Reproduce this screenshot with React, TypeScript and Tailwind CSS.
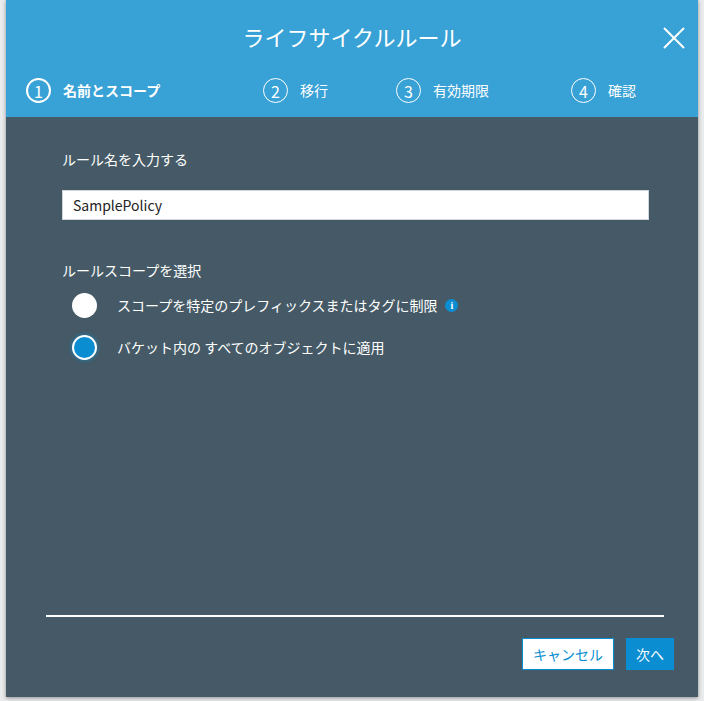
const font = { fontFamily: '"Noto Sans CJK JP", "Liberation Sans", sans-serif' };

const Step = ({ n, label, active }: { n: number; label: string; active?: boolean }) => (
  <div className="flex items-center gap-[12px]">
    <div
      className={`w-[25px] h-[25px] rounded-full border-white flex items-center justify-center text-white text-[16px] leading-none ${active ? "border-2" : "border-[1.5px]"}`}
    >
      {n}
    </div>
    <span className={`text-white text-[14px] ${active ? "font-bold" : ""}`}>{label}</span>
  </div>
);

export default function App() {
  return (
    <div className="w-[704px] h-[701px] bg-[#e9ebed] overflow-hidden" style={font}>
      <div className="ml-[6px] w-[692px] h-[697px] bg-[#455a66] flex flex-col shadow-[0_1px_4px_rgba(0,0,0,0.4)]">
        {/* Header */}
        <div className="h-[117px] bg-[#38a1d6] relative">
          <div className="text-center text-white text-[22px] pt-[20px]">ライフサイクルルール</div>
          <button className="absolute right-[12px] top-[26px]">
            <svg width="24" height="24" viewBox="0 0 24 24" stroke="white" strokeWidth="2" fill="none">
              <path d="M2 2L22 22M22 2L2 22" />
            </svg>
          </button>
          <div className="flex items-center mt-[25px] pl-[20px]">
            <div className="w-[237px]"><Step n={1} label="名前とスコープ" active /></div>
            <div className="w-[133px]"><Step n={2} label="移行" /></div>
            <div className="w-[175px]"><Step n={3} label="有効期限" /></div>
            <Step n={4} label="確認" />
          </div>
        </div>

        {/* Body */}
        <div className="flex-1 px-[56px] pt-[32px] text-white">
          <div className="text-[14px]">ルール名を入力する</div>
          <input
            className="mt-[20px] w-[587px] h-[30px] bg-white border border-gray-300 px-[10px] text-[14px] text-[#222]"
            defaultValue="SamplePolicy"
          />
          <div className="mt-[40px] text-[14px]">ルールスコープを選択</div>
          <div className="mt-[12px] ml-[10px] flex flex-col gap-[17px]">
            <label className="flex items-center gap-[20px] text-[14px]">
              <span className="w-[25px] h-[25px] rounded-full bg-white" />
              <span>スコープを特定のプレフィックスまたはタグに制限</span>
              <span className="w-[13px] h-[13px] rounded-full bg-[#0a8ed1] text-white text-[10px] font-bold leading-[13px] text-center -ml-[12px]" style={{ fontFamily: "serif" }}>i</span>
            </label>
            <label className="flex items-center gap-[20px] text-[14px]">
              <span className="w-[25px] h-[25px] rounded-full bg-[#0a8ed1] border-2 border-white shadow-[0_0_4px_rgba(10,142,209,0.8)]" />
              <span>バケット内の すべてのオブジェクトに適用</span>
            </label>
          </div>
        </div>

        {/* Footer */}
        <div className="pl-[40px] pr-[34px]">
          <div className="h-[2px] bg-white" />
        </div>
        <div className="flex justify-end gap-[12px] px-[24px] pt-[21px] pb-[27px]">
          <button className="h-[32px] px-[10px] bg-white border border-[#0a8ed1] text-[#0a8ed1] text-[14px]">キャンセル</button>
          <button className="h-[32px] px-[10px] bg-[#0a8ed1] text-white text-[14px]">次へ</button>
        </div>
      </div>
    </div>
  );
}
